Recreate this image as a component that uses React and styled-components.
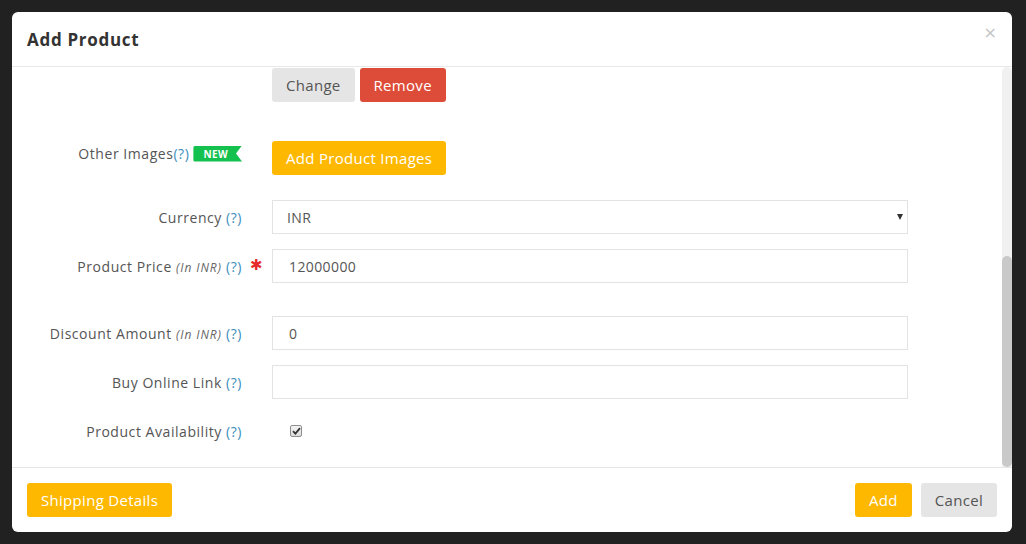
import styled, { createGlobalStyle } from "styled-components";

const GlobalStyle = createGlobalStyle`
  html, body {
    margin: 0;
    padding: 0;
    background: #212121;
    font-family: "Open Sans", "Noto Sans", sans-serif;
  }
  * {
    box-sizing: border-box;
  }
`;

const Backdrop = styled.div`
  width: 1026px;
  height: 544px;
  background: #212121;
  padding: 12px;
`;

const Modal = styled.div`
  width: 1000px;
  height: 520px;
  background: #fff;
  border-radius: 6px;
  display: flex;
  flex-direction: column;
  overflow: hidden;
`;

const Header = styled.div`
  height: 55px;
  padding: 0 15px;
  border-bottom: 1px solid #e8e8e8;
  display: flex;
  align-items: center;
  justify-content: space-between;
  flex-shrink: 0;
`;

const Title = styled.h4`
  margin: 0;
  font-size: 17px;
  font-weight: 700;
  color: #333;
  letter-spacing: 0.7px;
`;

const Close = styled.button`
  border: none;
  background: none;
  padding: 0;
  margin-right: 0;
  margin-top: -12px;
  font-size: 16px;
  line-height: 1;
  color: #c4c4c4;
  cursor: pointer;
  font-family: "DejaVu Sans", sans-serif;
`;

const Body = styled.div`
  height: 400px;
  flex-shrink: 0;
  display: flex;
`;

const Content = styled.div`
  flex: 1;
  padding: 1px 0 19px 15px;
`;

const ScrollTrack = styled.div`
  width: 10px;
  background: #f1f1f1;
  border-radius: 5px 5px 0 0;
  display: flex;
  flex-direction: column;
  justify-content: flex-end;
`;

const ScrollThumb = styled.div`
  height: 211px;
  background: #c9c9c9;
  border-radius: 5px;
`;

const Row = styled.div`
  display: flex;
  align-items: center;
  min-height: 34px;
  margin-bottom: ${(p) => p.$mb ?? 15}px;
  &:last-child {
    margin-bottom: 0;
  }
`;

const Label = styled.label`
  position: relative;
  width: 215px;
  flex-shrink: 0;
  align-self: ${(p) => (p.$top ? "flex-start" : "auto")};
  margin-top: ${(p) => (p.$top ? 3 : 0)}px;
  text-align: right;
  font-size: 14px;
  letter-spacing: 0.55px;
  color: #555;
  display: flex;
  justify-content: flex-end;
  align-items: center;
  gap: 4px;
  white-space: nowrap;
`;

const Help = styled.span`
  color: #3c8dbc;
`;

const Small = styled.i`
  font-size: 12px;
  letter-spacing: 0.9px;
  color: #666;
`;

const Required = styled.span`
  position: absolute;
  right: -21px;
  top: -1px;
  color: #e52b2b;
  font-size: 15px;
  font-family: "DejaVu Sans", sans-serif;
`;

const NewBadge = styled.span`
  display: inline-block;
  background: #14c14e;
  color: #fff;
  font-size: 10px;
  font-weight: 700;
  line-height: 16px;
  height: 16px;
  padding: 0 14px 0 10px;
  border-radius: 2px 0 0 2px;
  clip-path: polygon(0 0, 100% 0, calc(100% - 6px) 50%, 100% 100%, 0 100%);
  letter-spacing: 0.4px;
`;

const Control = styled.div`
  margin-left: 30px;
  width: 636px;
  display: flex;
  gap: 5px;
  position: relative;
`;

const Input = styled.input`
  width: 100%;
  height: 34px;
  border: 1px solid #e3e3e3;
  padding: 0 16px;
  font-size: 14px;
  letter-spacing: 0.4px;
  color: #555;
  font-family: inherit;
  outline: none;
`;

const Select = styled.select`
  width: 100%;
  height: 34px;
  border: 1px solid #e3e3e3;
  padding: 0 14px;
  font-size: 14px;
  letter-spacing: 0.4px;
  color: #555;
  font-family: inherit;
  background: #fff;
  appearance: none;
  outline: none;
`;

const Caret = styled.span`
  position: absolute;
  right: 5px;
  top: 14px;
  width: 0;
  height: 0;
  border-left: 3.5px solid transparent;
  border-right: 3.5px solid transparent;
  border-top: 6px solid #333;
  pointer-events: none;
`;

const Button = styled.button`
  height: 34px;
  padding: 0 14px;
  border: none;
  border-radius: 3px;
  font-size: 15px;
  letter-spacing: 0.3px;
  font-family: inherit;
  cursor: pointer;
  background: ${(p) =>
    p.$variant === "danger"
      ? "#dd4b39"
      : p.$variant === "primary"
      ? "#ffb800"
      : "#e5e5e5"};
  color: ${(p) => (p.$variant === "default" ? "#555" : "#fff")};
`;

const Check = styled.span`
  display: inline-flex;
  align-items: center;
  justify-content: center;
  width: 12px;
  height: 12px;
  margin-left: 18px;
  border: 1px solid #8f8f8f;
  border-radius: 2px;
  background: linear-gradient(#f4f4f4, #dcdcdc);
`;

const Footer = styled.div`
  flex: 1;
  border-top: 1px solid #e6e6e6;
  padding: 15px;
  display: flex;
  align-items: flex-start;
  justify-content: space-between;
`;

const Actions = styled.div`
  display: flex;
  gap: 9px;
`;

function Field({ label, italic, mb, required, children }) {
  return (
    <Row $mb={mb}>
      <Label>
        <span>
          {label} {italic && <Small>(In INR)</Small>} <Help>(?)</Help>
        </span>
        {required && <Required>✱</Required>}
      </Label>
      <Control>{children}</Control>
    </Row>
  );
}

export default function App() {
  return (
    <Backdrop>
      <GlobalStyle />
      <Modal>
        <Header>
          <Title>Add Product</Title>
          <Close>×</Close>
        </Header>
        <Body>
          <Content>
            <Row $mb={39}>
              <Label />
              <Control>
                <Button $variant="default">Change</Button>
                <Button $variant="danger">Remove</Button>
              </Control>
            </Row>
            <Row $mb={25}>
              <Label $top>
                <span>
                  Other Images<Help>(?)</Help>
                </span>
                <NewBadge>NEW</NewBadge>
              </Label>
              <Control>
                <Button $variant="primary">Add Product Images</Button>
              </Control>
            </Row>
            <Field label="Currency">
              <Select defaultValue="INR">
                <option value="INR">INR</option>
              </Select>
              <Caret />
            </Field>
            <Field label="Product Price" italic required mb={33}>
              <Input defaultValue="12000000" />
            </Field>
            <Field label="Discount Amount" italic>
              <Input defaultValue="0" />
            </Field>
            <Field label="Buy Online Link">
              <Input defaultValue="" />
            </Field>
            <Field label="Product Availability">
              <Check>
                <svg width="9" height="8" viewBox="0 0 9 8">
                  <path
                    d="M1 4.2 L3.4 6.6 L8 1.2"
                    fill="none"
                    stroke="#333"
                    strokeWidth="1.8"
                  />
                </svg>
              </Check>
            </Field>
          </Content>
          <ScrollTrack>
            <ScrollThumb />
          </ScrollTrack>
        </Body>
        <Footer>
          <Button $variant="primary">Shipping Details</Button>
          <Actions>
            <Button $variant="primary">Add</Button>
            <Button $variant="default">Cancel</Button>
          </Actions>
        </Footer>
      </Modal>
    </Backdrop>
  );
}
